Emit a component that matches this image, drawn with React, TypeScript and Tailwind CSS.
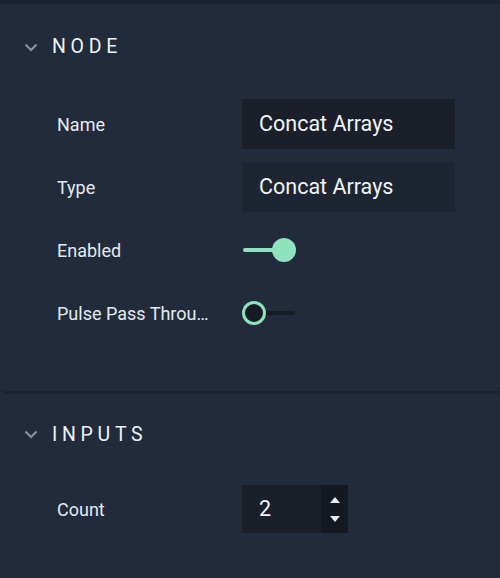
import React, { useState } from "react";

const Chevron = () => (
  <svg width="14" height="9" viewBox="0 0 14 9" className="shrink-0">
    <path d="M1.5 1.5 L7 7 L12.5 1.5" fill="none" stroke="#8a93a3" strokeWidth="2" />
  </svg>
);

function Toggle({ on }: { on: boolean }) {
  return (
    <div className="relative h-[24px] w-[54px] flex items-center">
      <div className={`ml-[1px] h-[4px] w-[52px] rounded-full ${on ? "bg-[#8ee2bd]" : "bg-[#161b24]"}`} />
      {on ? (
        <div className="absolute left-[30px] top-0 h-[24px] w-[24px] rounded-full bg-[#8ee2bd]" />
      ) : (
        <div className="absolute left-0 top-0 h-[24px] w-[24px] rounded-full border-[3px] border-[#8ee2bd] bg-[#161b24]" />
      )}
    </div>
  );
}

function Row({ label, children }: { label: string; children: React.ReactNode }) {
  return (
    <div className="flex items-center h-[50px]">
      <div className="w-[242px] shrink-0 pl-[57px] pr-[20px] text-[18px] text-[#e4e9f0] whitespace-nowrap overflow-hidden">{label}</div>
      <div className="w-[213px]">{children}</div>
    </div>
  );
}

export default function App() {
  const [count] = useState(2);

  return (
    <div
      className="w-[500px] h-[578px] bg-[#222b3b] overflow-hidden"
      style={{ fontFamily: "Roboto, 'Noto Sans', sans-serif" }}
    >
      <div className="h-[4px] bg-[#1b2230]" />

      {/* Node */}
      <div className="flex items-center gap-[14px] pl-[24px] pt-[31px] h-[55px]">
        <Chevron />
        <span className="text-[19.5px] tracking-[0.24em] text-[#eef2f7]">NODE</span>
      </div>

      <div className="flex flex-col gap-[13px] mt-[40px]">
        <Row label="Name">
          <div className="h-[50px] bg-[#1a1f29] flex items-center pl-[17px] text-[21.5px] text-[#f0f3f8]">
            Concat Arrays
          </div>
        </Row>
        <Row label="Type">
          <div className="h-[50px] bg-[#1e2532] flex items-center pl-[17px] text-[21.5px] text-[#f0f3f8]">
            Concat Arrays
          </div>
        </Row>
        <Row label="Enabled">
          <Toggle on />
        </Row>
        <Row label="Pulse Pass Throu…">
          <Toggle on={false} />
        </Row>
      </div>

      <div className="ml-[3px] mt-[53px] h-[3px] bg-[#1b2230]" />

      {/* Inputs */}
      <div className="flex items-center gap-[14px] pl-[24px] pt-[29px] h-[52px]">
        <Chevron />
        <span className="text-[19.5px] tracking-[0.24em] text-[#eef2f7]">INPUTS</span>
      </div>

      <div className="mt-[38px]">
        <div className="flex items-center h-[50px]">
          <div className="w-[242px] shrink-0 pl-[57px] text-[18px] text-[#e4e9f0]">Count</div>
          <div className="flex h-[48px] w-[106px] bg-[#1a1f29]">
            <div className="flex-1 flex items-center pl-[17px] text-[21.5px] text-[#f0f3f8]">{count}</div>
            <div className="w-[27px] bg-[#141821] flex flex-col items-center justify-center gap-[13px]">
              <svg width="10" height="6" viewBox="0 0 10 6"><path d="M0 6 L5 0 L10 6 Z" fill="#e8ecf2" /></svg>
              <svg width="10" height="6" viewBox="0 0 10 6"><path d="M0 0 L5 6 L10 0 Z" fill="#e8ecf2" /></svg>
            </div>
          </div>
        </div>
      </div>
    </div>
  );
}
